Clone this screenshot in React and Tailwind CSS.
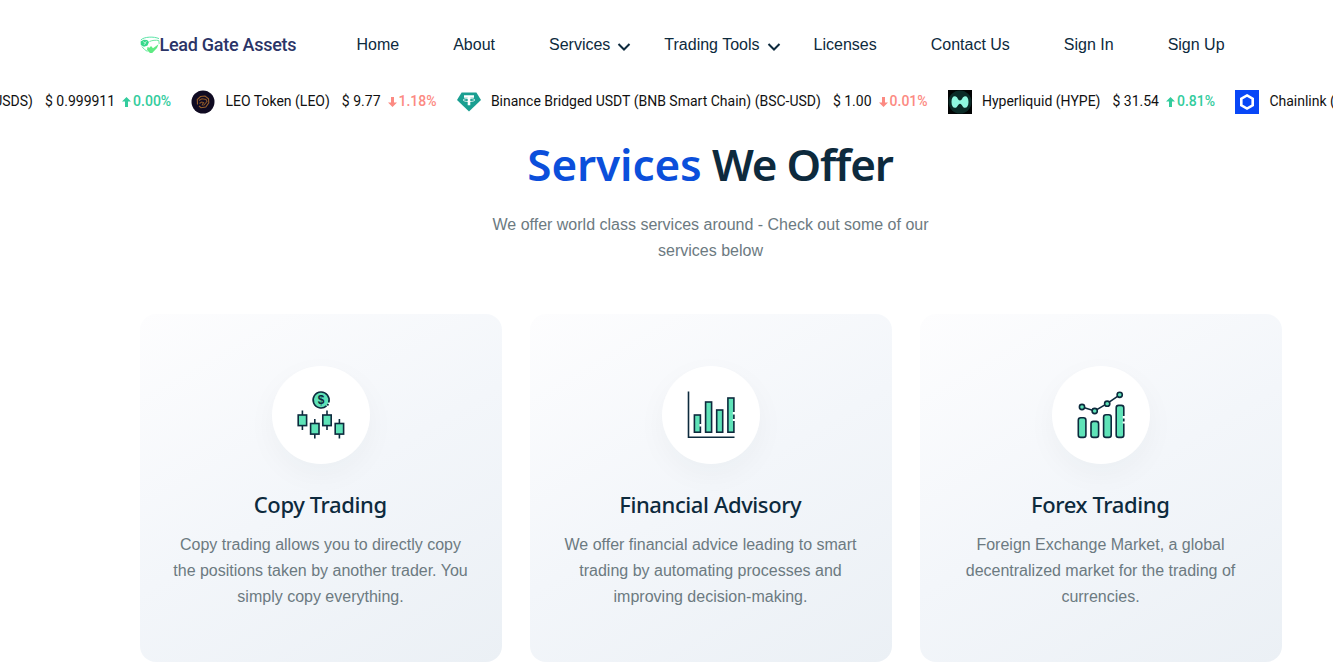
const navLinks = [
  { label: 'Home' },
  { label: 'About' },
  { label: 'Services', menu: true },
  { label: 'Trading Tools', menu: true },
  { label: 'Licenses' },
  { label: 'Contact Us' },
  { label: 'Sign In' },
  { label: 'Sign Up' },
];

const coins = [
  { name: 'LEO Token (LEO)', price: '$ 9.77', change: '1.18%', up: false, Icon: LeoIcon },
  { name: 'Binance Bridged USDT (BNB Smart Chain) (BSC-USD)', price: '$ 1.00', change: '0.01%', up: false, Icon: TetherIcon },
  { name: 'Hyperliquid (HYPE)', price: '$ 31.54', change: '0.81%', up: true, Icon: HypeIcon },
  { name: 'Chainlink (LINK)', price: '$ 13.42', change: '0.52%', up: true, Icon: LinkIcon },
];

const services = [
  {
    title: 'Copy Trading',
    text: 'Copy trading allows you to directly copy the positions taken by another trader. You simply copy everything.',
    Icon: CandlesIcon,
  },
  {
    title: 'Financial Advisory',
    text: 'We offer financial advice leading to smart trading by automating processes and improving decision-making.',
    Icon: BarsIcon,
  },
  {
    title: 'Forex Trading',
    text: 'Foreign Exchange Market, a global decentralized market for the trading of currencies.',
    Icon: TrendIcon,
  },
];

function LogoIcon() {
  return (
    <svg className="h-[18px] w-5 shrink-0" viewBox="0 0 20 18" fill="none">
      <path d="M.8 4C4 .6 14 .3 19 2.600" stroke="#5be5a8" strokeWidth="1" />
      <path d="M.6 5.500 3.600 3.700l3.500.2L9 6 7.500 9.500l-3.500 1.300L.8 9z" fill="#35d98b" />
      <path d="M3 5.500l3 2M6.500 5 4 9" stroke="#d6f9e6" strokeWidth=".7" />
      <path d="M9.500 5.500c3-1.300 6-1.500 9.300-1L19.200 8" stroke="#6be8a0" strokeWidth="1" />
      <path d="M7 14l.5-3 2 .8 1.500-1.800 2 2.200 5.500-4-1.500 3.800-4.800 5-2.200 0z" fill="#5eea82" />
      <path d="M2 10.500c1.500 2.300 3.300 3.800 5.500 4.900" stroke="#5ee9a0" strokeWidth="1" />
    </svg>
  );
}

function LeoIcon() {
  return (
    <svg className="size-6" viewBox="0 0 24 24" fill="none">
      <circle cx="12" cy="12" r="11.500" fill="#100b22" />
      <path d="M6.500 14.500 6.300 9.500 9.500 6.500l4.500-.5 3.500 2.800.3 4-3 4.200-4.800.7-2-1.700" stroke="#9a602c" strokeWidth="1.100" />
      <path d="M8 10.500l3-1.700 4 .7 1 2-3.500 4M8.500 13.500l2-1.500 2 .5-1.500 3" stroke="#8a5527" strokeWidth="1.100" />
    </svg>
  );
}

function TetherIcon() {
  return (
    <svg className="size-6" viewBox="0 0 24 24">
      <path d="M4.600 2.400h14.800L24 10 12 21.400 0 10z" fill="#1a9f91" />
      <path d="M7 5.300h10v2.400h-3.700v7.500h-2.600V7.700H7z" fill="#fff" />
      <ellipse cx="12" cy="10" rx="5.800" ry="1.600" fill="none" stroke="#fff" strokeWidth=".8" />
    </svg>
  );
}

function HypeIcon() {
  return (
    <svg className="size-6" viewBox="0 0 24 24">
      <path d="M0 0h24v24H0z" fill="#020404" />
      <circle cx="12" cy="12" r="11.500" fill="#0b2b27" />
      <path d="M3.500 12c0-3.800 1.300-5.800 3.400-5.800 2.800 0 3 4.300 5.100 4.300s2.300-4.300 5.100-4.300c2.100 0 3.400 2 3.400 5.800s-1.400 5.800-3.500 5.800c-2.700 0-2.900-4.100-5-4.100s-2.300 4.100-5 4.100c-2.100 0-3.500-2-3.500-5.800z" fill="#8ff8e0" />
    </svg>
  );
}

function LinkIcon() {
  return (
    <svg className="size-6" viewBox="0 0 24 24">
      <path d="M0 0h24v24H0z" fill="#0847f7" />
      <path d="M12 5.400l5.700 3.300v6.600L12 18.600l-5.700-3.300V8.700z" fill="none" stroke="#fff" strokeWidth="2.600" />
    </svg>
  );
}

function CandlesIcon() {
  const candles = [
    { x: 5.4, y: 24 },
    { x: 17.8, y: 32.5 },
    { x: 30, y: 24 },
    { x: 42.4, y: 32.5 },
  ];
  return (
    <svg className="size-12" viewBox="0 0 48 48" fill="#5fe3b8" stroke="#0d2a3d" strokeWidth="1.600">
      <path d="M29.500 14.900A8 8 0 1 1 31.700 11.500" />
      <text x="24" y="13.400" textAnchor="middle" fontFamily="Liberation Sans" fontWeight="700" fontSize="12" fill="#0d2a3d" stroke="none">$</text>
      <circle cx="30.900" cy="13.800" r="1" fill="#0d2a3d" stroke="none" />
      {candles.map((c) => (
        <g key={c.x}>
          <path d={`M${c.x} ${c.y - 4.5}v19.5`} />
          <rect x={c.x - 4.2} y={c.y} width="8.400" height="10.600" />
        </g>
      ))}
    </svg>
  );
}

function BarsIcon() {
  return (
    <svg className="size-12" viewBox="0 0 48 48" fill="#5fe3b8" stroke="#0d2a3d" strokeWidth="1.600">
      <path d="M1.500.6v45.700h46" fill="none" />
      <rect x="7.400" y="24" width="6" height="17.200" />
      <rect x="18.600" y="11" width="6" height="30.200" />
      <rect x="29.700" y="19" width="6" height="22.200" />
      <rect x="40.900" y="7" width="6" height="34.200" />
      <path d="M13.600 33v2.600M47 21v2.600M47 28v2" stroke="#fff" strokeWidth="2.400" />
    </svg>
  );
}

function TrendIcon() {
  return (
    <svg className="size-12" viewBox="0 0 48 48" fill="#5fe3b8" stroke="#0d2a3d" strokeWidth="1.600">
      <rect x="1.300" y="26.800" width="7.600" height="19.600" rx="2.400" />
      <rect x="14" y="30.400" width="7.600" height="16" rx="2.400" />
      <rect x="26.600" y="23.800" width="7.600" height="22.600" rx="2.400" />
      <rect x="39.200" y="14.400" width="7.600" height="32" rx="2.400" />
      <path d="M46.900 25v2.600M46.900 30.600v2" stroke="#fff" strokeWidth="2.400" />
      <path d="M5 16l12.700 4L30 12.700l12.700-8.900" fill="none" />
      <circle cx="5" cy="16" r="2.600" />
      <circle cx="17.700" cy="20" r="2.600" />
      <circle cx="30.200" cy="12.700" r="2.600" />
      <circle cx="42.700" cy="3.800" r="2.600" />
    </svg>
  );
}

function Change({ up, value }) {
  return (
    <span className={`ml-[7px] flex items-center gap-[2px] font-medium ${up ? 'text-[#33cc9d]' : 'text-[#fc8a82]'}`}>
      <svg className={up ? 'mt-[2px] h-[10px] w-[9px]' : 'mt-[2px] h-[10px] w-[9px] rotate-180'} viewBox="0 0 9 10" fill="currentColor">
        <path d="M4.500 0 9 4.500H6V10H3V4.500H0z" />
      </svg>
      {value}
    </span>
  );
}

function Ticker() {
  return (
    <div className="h-[38px] overflow-hidden font-['Roboto',sans-serif] text-sm leading-[22px] text-[#111]">
      <div className="-ml-[9px] flex h-[26px] w-max items-center whitespace-nowrap">
        <div className="mr-[20.3px] flex items-center pb-[2px]">
          <span className="flex w-[42px] justify-end">(USDS)</span>
          <span className="ml-3">$ 0.999911</span>
          <Change up value="0.00%" />
        </div>
        {coins.map(({ name, price, change, up, Icon }) => (
          <div key={name} className="mr-[20.3px] flex items-center">
            <Icon />
            <div className="ml-[10px] flex items-center pb-[2px]">
              <span>{name}</span>
              <span className="ml-3">{price}</span>
              <Change up={up} value={change} />
            </div>
          </div>
        ))}
      </div>
    </div>
  );
}

export default function App() {
  return (
    <div className="h-[667px] overflow-hidden bg-white font-['Liberation_Sans',Arial,sans-serif] text-base text-[#6c7a81]">
      <header className="flex h-[89px] items-center pl-[139.5px]">
        <a className="flex w-[217px] items-center font-['Roboto',sans-serif] text-lg font-medium text-[#2b3467]">
          <LogoIcon />
          <span className="whitespace-nowrap tracking-[-0.27px]">Lead Gate Assets</span>
        </a>
        <nav className="flex gap-[54px] whitespace-nowrap text-[#0d2a3d]">
          {navLinks.map((link) => (
            <a key={link.label} className="relative">
              {link.label}
              {link.menu && (
                <svg className="absolute top-[10px] -right-[21px] h-2 w-[14px]" viewBox="0 0 14 8" fill="none" stroke="currentColor" strokeWidth="2">
                  <path d="M1.500 1 7 6.500 12.500 1" />
                </svg>
              )}
            </a>
          ))}
        </nav>
      </header>

      <Ticker />

      <main className="ml-[140px] w-[1142px]">
        <div className="flex flex-col items-center pr-px text-center">
          <h1 className="mt-[9px] h-[58px] pr-px font-['Noto_Sans',sans-serif] text-[44px] leading-[56px] font-semibold whitespace-nowrap text-[#0d2a3d]">
            <span className="tracking-[-0.1px] text-[#0b4fdb]">Services</span>
            <span className="tracking-[-1.2px]"> We Offer</span>
          </h1>
          <p className="mt-[18px] w-[460px] leading-[26px]">
            We offer world class services around - Check out some of our services below
          </p>
        </div>

        <div className="mt-[50px] grid grid-cols-3 gap-7">
          {services.map(({ title, text, Icon }) => (
            <div key={title} className="flex h-[348px] flex-col items-center rounded-2xl bg-linear-[150deg,#fdfdfe_0%,#f3f6fa_50%,#ebf0f5_100%] px-[30px] pt-[52px] text-center">
              <div className="flex size-[98px] items-center justify-center rounded-full bg-white shadow-[0_10px_30px_rgba(13,42,61,0.04)]">
                <Icon />
              </div>
              <h3 className="mt-[25px] pr-[1.5px] font-['Noto_Sans',sans-serif] text-[22px] leading-[30px] font-medium tracking-[-0.4px] text-[#0d2a3d]">{title}</h3>
              <p className="mt-[13px] pr-px leading-[26px]">{text}</p>
            </div>
          ))}
        </div>
      </main>
    </div>
  );
}
